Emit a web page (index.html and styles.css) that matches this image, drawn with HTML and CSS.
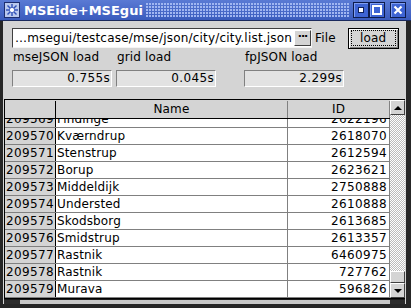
FILE: index.html
```html
<!DOCTYPE html>
<html>
    <head>
        <title>MSEide+MSEgui</title>
        <link rel="stylesheet" href="styles.css">
    </head>
    <body>
        <div class="window">
            <!-- title bar -->
            <div class="titlebar">
                <svg class="appicon" width="16" height="16" viewBox="0 0 16 16">
                    <rect x="0.5" y="0.5" width="15" height="15" fill="#b9c8ee" stroke="#1d2d6e"/>
                    <g stroke="#3050b8" stroke-width="1.4">
                        <line x1="8" y1="2" x2="8" y2="14"/>
                        <line x1="2" y1="8" x2="14" y2="8"/>
                        <line x1="3.5" y1="3.5" x2="12.5" y2="12.5"/>
                        <line x1="12.5" y1="3.5" x2="3.5" y2="12.5"/>
                    </g>
                    <circle cx="8" cy="8" r="2.6" fill="#fff" stroke="#3050b8" stroke-width="0.8"/>
                </svg>
                <span class="title">MSEide+MSEgui</span>
                <div class="dots"></div>
                <span class="tbtn"><span class="gmin"></span></span>
                <span class="tbtn"><span class="gmax"></span></span>
                <span class="tbtn close">
                    <svg width="10" height="10" viewBox="0 0 10 10">
                        <path d="M1.5 1.5 L8.5 8.5 M8.5 1.5 L1.5 8.5" stroke="#fff" stroke-width="2.2"/>
                    </svg>
                </span>
            </div>

            <div class="client">
                <div class="top">
                    <div class="toprow">
                        <div class="edit">
                            <span class="edittext">…msegui/testcase/mse/json/city/city.list.json</span>
                            <span class="dotbtn">···</span>
                        </div>
                        <span class="filelbl">File</span>
                        <div class="loadbtn"><span>load</span></div>
                    </div>

                    <div class="timings">
                        <div class="timing">
                            <div class="lbl">mseJSON load</div>
                            <div class="val">0.755s</div>
                        </div>
                        <div class="timing">
                            <div class="lbl">grid load</div>
                            <div class="val">0.045s</div>
                        </div>
                        <div class="timing third">
                            <div class="lbl">fpJSON load</div>
                            <div class="val">2.299s</div>
                        </div>
                    </div>
                </div>

                <!-- grid -->
                <div class="grid">
                    <div class="table">
                        <div class="hrow">
                            <div class="c0"></div>
                            <div class="c1">Name</div>
                            <div class="c2">ID</div>
                        </div>
                        <div class="body">
                            <div class="rows">
                                <div class="row"><div class="c0">209569</div><div class="c1">Findinge</div><div class="c2">2622196</div></div>
                                <div class="row"><div class="c0">209570</div><div class="c1">Kværndrup</div><div class="c2">2618070</div></div>
                                <div class="row"><div class="c0">209571</div><div class="c1">Stenstrup</div><div class="c2">2612594</div></div>
                                <div class="row"><div class="c0">209572</div><div class="c1">Borup</div><div class="c2">2623621</div></div>
                                <div class="row"><div class="c0">209573</div><div class="c1">Middeldijk</div><div class="c2">2750888</div></div>
                                <div class="row"><div class="c0">209574</div><div class="c1">Understed</div><div class="c2">2610888</div></div>
                                <div class="row"><div class="c0">209575</div><div class="c1">Skodsborg</div><div class="c2">2613685</div></div>
                                <div class="row"><div class="c0">209576</div><div class="c1">Smidstrup</div><div class="c2">2613357</div></div>
                                <div class="row"><div class="c0">209577</div><div class="c1">Rastnik</div><div class="c2">6460975</div></div>
                                <div class="row"><div class="c0">209578</div><div class="c1">Rastnik</div><div class="c2">727762</div></div>
                                <div class="row"><div class="c0">209579</div><div class="c1">Murava</div><div class="c2">596826</div></div>
                            </div>
                        </div>
                    </div>
                    <div class="vscroll">
                        <div class="sbtn"><span class="arrup"></span></div>
                        <div class="track"></div>
                        <div class="thumb"></div>
                        <div class="sbtn down"><span class="arrdown"></span></div>
                    </div>
                </div>
                <div class="hbar"><div class="hthumb"></div></div>
            </div>
        </div>
    </body>
</html>
```

FILE: styles.css
```css
body {
    margin: 0;
    background: #262626;
    font-family: "DejaVu Sans", sans-serif;
    font-size: 12px;
    letter-spacing: 0.15px;
    color: #000;
    overflow: hidden;
}

.window {
    width: 411px;
    height: 308px;
    background: #262626;
}

/* title bar */
.titlebar {
    height: 20px;
    display: flex;
    align-items: center;
    background: linear-gradient(#5a7ad4, #3a5bbd);
    border-bottom: 1px solid #1b2a5c;
}

.appicon {
    margin-left: 4px;
    flex: none;
}

.title {
    margin-left: 4px;
    padding-top: 1px;
    font-size: 13px;
    font-weight: bold;
    letter-spacing: 0;
    color: #fff;
    white-space: nowrap;
}

.dots {
    flex: 1;
    height: 15px;
    margin: 0 3px 0 3px;
    background-image: radial-gradient(circle at 1px 1px, #a3b8f2 0.7px, transparent 1px);
    background-size: 3px 3px;
}

.tbtn {
    width: 16px;
    height: 16px;
    box-sizing: border-box;
    border: 1px solid #0e1c4c;
    background: #3e64d3;
    box-shadow: inset 1px 1px #7f9df0;
    display: flex;
    align-items: center;
    justify-content: center;
    flex: none;
}

.tbtn.close {
    margin-left: 5px;
    margin-right: 5px;
}

.gmin {
    width: 4px;
    height: 4px;
    background: #fff;
    border: 1px solid #10205a;
}

.gmax {
    width: 6px;
    height: 6px;
    border: 2px solid #fff;
}

/* client */
.client {
    margin-left: 3px;
    width: 403px;
    background: #d4d4d4;
}

.top {
    padding: 7px 0 0 9px;
}

.toprow {
    display: flex;
    align-items: flex-start;
    height: 21px;
}

.edit {
    width: 300px;
    height: 20px;
    box-sizing: border-box;
    border: 1px solid;
    border-color: #404040 #f4f4f4 #f4f4f4 #404040;
    background: #fff;
    display: flex;
    align-items: center;
}

.edittext {
    flex: 1;
    padding-left: 2px;
    line-height: 18px;
    letter-spacing: 0.2px;
    white-space: nowrap;
    overflow: hidden;
}

.dotbtn {
    width: 17px;
    height: 16px;
    box-sizing: border-box;
    background: #d4d4d4;
    border: 1px solid;
    border-color: #fff #404040 #404040 #fff;
    font-weight: bold;
    font-size: 11px;
    line-height: 12px;
    letter-spacing: -1px;
    text-align: center;
}

.filelbl {
    margin-left: 3px;
    line-height: 20px;
}

.loadbtn {
    margin-left: 12px;
    width: 51px;
    height: 21px;
    box-sizing: border-box;
    border: 1px solid #000;
    background: #d4d4d4;
    box-shadow: inset 1px 1px #fff, inset -1px -1px #808080;
    display: flex;
    align-items: flex-start;
    justify-content: center;
    padding-top: 1px;
}

.loadbtn span {
    width: 45px;
    height: 16px;
    box-sizing: border-box;
    border: 1px dotted #000;
    text-align: center;
    line-height: 14px;
}

.timings {
    display: flex;
    margin-top: 1px;
}

.timing {
    width: 100px;
    margin-right: 4px;
}

.timing.third {
    margin-left: 24px;
}

.lbl {
    padding-left: 1px;
    line-height: 14px;
    margin-bottom: 6px;
    white-space: nowrap;
}

.val {
    height: 17px;
    box-sizing: border-box;
    border: 1px solid;
    border-color: #808080 #fff #fff #808080;
    background: #e2e2e2;
    text-align: right;
    padding-right: 1px;
    line-height: 15px;
    letter-spacing: 0.35px;
}

/* grid */
.grid {
    margin-top: 12px;
    margin-left: 1px;
    width: 401px;
    height: 200px;
    box-sizing: border-box;
    border-top: 1px solid #000;
    border-bottom: 1px solid #000;
    border-left: 1px solid #000;
    display: flex;
}

.table {
    width: 385px;
    display: flex;
    flex-direction: column;
}

.hrow {
    display: flex;
    height: 19px;
    box-sizing: border-box;
    border-bottom: 1px solid #000;
    background: #d4d4d4;
    line-height: 17px;
    padding-top: 1px;
}

.c0, .c1, .c2 {
    box-sizing: border-box;
    white-space: nowrap;
    overflow: hidden;
}

.c0 {
    width: 51px;
    border-right: 1px solid #000;
    padding-left: 1px;
    letter-spacing: 0.35px;
}

.c1 {
    width: 232px;
    border-right: 1px solid #808080;
    padding-left: 1px;
}

.c2 {
    width: 102px;
    border-right: 1px solid #808080;
    text-align: right;
    padding-right: 2px;
    letter-spacing: 0.35px;
}

.hrow .c1, .hrow .c2 {
    text-align: center;
    padding: 0;
    letter-spacing: 0.15px;
}

.body {
    height: 179px;
    overflow: hidden;
}

.rows {
    margin-top: -8px;
}

.row {
    display: flex;
    height: 17px;
    box-sizing: border-box;
    border-bottom: 1px solid #808080;
    line-height: 16px;
}

.row .c0 {
    background: #d4d4d4;
}

.row .c1, .row .c2 {
    background: #fff;
}

.vscroll {
    width: 15px;
    display: flex;
    flex-direction: column;
}

.sbtn, .thumb {
    box-sizing: border-box;
    background: #d4d4d4;
    border: 1px solid;
    border-color: #fff #404040 #404040 #fff;
    display: flex;
    align-items: center;
    justify-content: center;
}

.sbtn {
    height: 15px;
}

.thumb {
    height: 12px;
}

.track {
    flex: 1;
    background: repeating-conic-gradient(#fff 0 25%, #bcbcbc 0 50%) 0 0 / 2px 2px;
}

.arrup {
    width: 0;
    height: 0;
    border-left: 4px solid transparent;
    border-right: 4px solid transparent;
    border-bottom: 4px solid #000;
}

.arrdown {
    width: 0;
    height: 0;
    border-left: 4px solid transparent;
    border-right: 4px solid transparent;
    border-top: 4px solid #000;
}

.hbar {
    margin-left: 1px;
    width: 401px;
    height: 5px;
    box-sizing: border-box;
    border-top: 1px solid #1a1a1a;
    background: #2c2c2c;
    display: flex;
}

.hthumb {
    margin-left: 16px;
    width: 370px;
    background: #c8c8c8;
}
```
